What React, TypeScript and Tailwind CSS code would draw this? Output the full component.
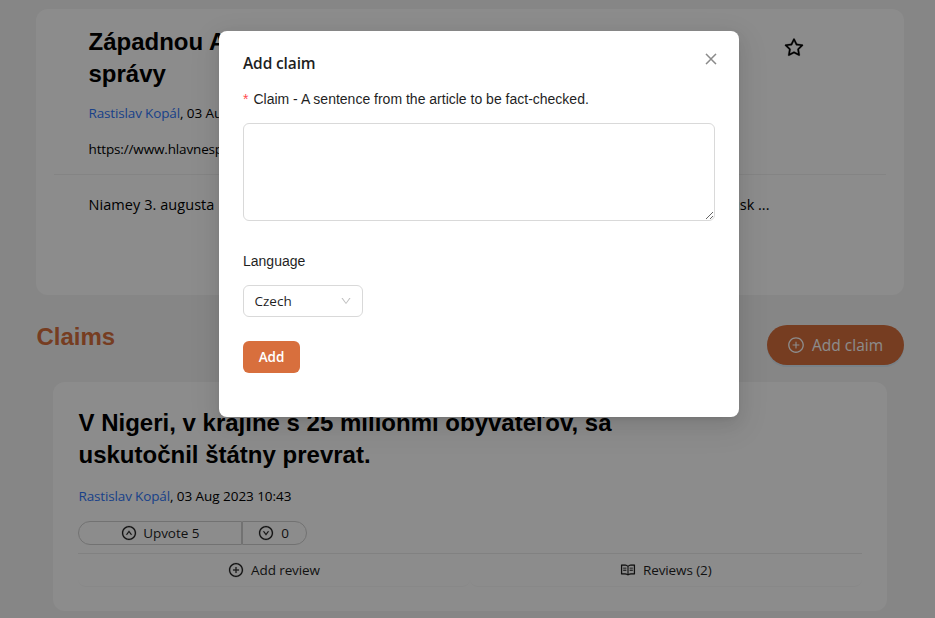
import type { ReactNode } from "react";
import {
  AiOutlineClose,
  AiOutlineDown,
  AiOutlineDownCircle,
  AiOutlinePlusCircle,
  AiOutlineRead,
  AiOutlineStar,
  AiOutlineUpCircle,
} from "react-icons/ai";

const UI = "font-['Open_Sans','Noto_Sans',sans-serif]";
const ARIAL = "font-['Liberation_Sans',Arial,sans-serif]";

function Heading({ children }: { children: ReactNode }) {
  return (
    <h2 className={`${ARIAL} text-2xl leading-8 font-bold text-black`}>
      {children}
    </h2>
  );
}

function Byline({ date }: { date: string }) {
  return (
    <p className="text-[13.5px] leading-[22px] tracking-[-0.05px] whitespace-nowrap text-black">
      <a className="tracking-[-0.15px] text-[#3077fa]">Rastislav Kopál</a>, {date}
    </p>
  );
}

function ArticleCard() {
  return (
    <section className="h-[286px] rounded-xl bg-white px-[18px] pt-[17px]">
      <div className="flex h-[149px] justify-between border-b border-[#f0f0f0] pr-[81px] pl-[34.5px]">
        <div className="w-[560px]">
          <Heading>
            Západnou Afrikou otriasa prevrat, hlavné
            <br />
            správy
          </Heading>
          <div className="mt-3">
            <Byline date="03 Aug 2023" />
          </div>
          <p className="mt-3.5 text-[13.5px] leading-[22px] tracking-[-0.15px]">
            https://www.hlavnesp
          </p>
        </div>
        <AiOutlineStar className="mt-[11px] size-[22px] stroke-[12] text-black" />
      </div>
      <div className="mt-[19px] flex w-[715.5px] justify-between pl-[34.5px] text-[14.5px] leading-[22px] text-black">
        <span className="tracking-[0.06px]">Niamey 3. augusta</span>
        <span>vojusk ...</span>
      </div>
    </section>
  );
}

function ClaimsHeader() {
  return (
    <div className="mt-[30px] flex h-10 justify-between">
      <h2 className={`${ARIAL} pl-[0.5px] text-2xl leading-6 font-bold text-[#d86f3d]`}>Claims</h2>
      <button className="flex h-10 w-[137px] items-center gap-2 rounded-full bg-[#d86f3d] pl-5 text-[15.5px] text-white shadow-[0_2px_0_rgba(5,145,255,0.1)]">
        <AiOutlinePlusCircle className="size-[18px]" />
        <span className="-ml-px pt-0.5">Add claim</span>
      </button>
    </div>
  );
}

function ClaimCard() {
  return (
    <section className="mx-[17px] mt-[17px] h-[229px] rounded-xl bg-white px-[25px] pt-[25px]">
      <div className="pl-[0.5px]">
        <Heading>
          V Nigeri, v krajine s 25 miliónmi obyvateľov, sa
          <br />
          uskutočnil štátny prevrat.
        </Heading>
        <div className="mt-3.5">
          <Byline date="03 Aug 2023 10:43" />
        </div>
      </div>
      <div className="mt-3.5 flex h-6 text-[13.5px] text-[#1f1f1f]">
        <button className="flex w-[164px] items-center justify-center gap-2 rounded-l-full border border-[#d0d0d0] tracking-[-0.05px]">
          <AiOutlineUpCircle className="size-4 stroke-[12]" />
          <span className="-ml-[1.5px]">Upvote 5</span>
        </button>
        <button className="flex w-[65px] items-center justify-center gap-2 rounded-r-full border border-[#d0d0d0] pr-0.5">
          <AiOutlineDownCircle className="size-4 stroke-[12]" />
          <span className="-ml-px">0</span>
        </button>
      </div>
      <ul className="mt-2 flex h-[34px] border-t border-[#ebebeb] text-[13.5px] tracking-[-0.1px] text-[#1f1f1f]">
        <li className="flex flex-1 items-center justify-center gap-2 rounded-b-lg border-b border-[#f8f8f8]">
          <AiOutlinePlusCircle className="size-4 stroke-[12]" />
          <span className="-ml-px">Add review</span>
        </li>
        <li className="flex flex-1 items-center justify-center gap-2 rounded-b-lg border-b border-[#f8f8f8]">
          <AiOutlineRead className="size-4 stroke-[8]" />
          <span className="-ml-[1.5px]">Reviews (2)</span>
        </li>
      </ul>
    </section>
  );
}

function ClaimDialog() {
  return (
    <div
      role="dialog"
      className="relative mt-[31px] ml-[219px] h-[386px] w-[520px] rounded-lg bg-white px-6 pt-5 text-[#1f1f1f] shadow-[0_6px_16px_0_rgba(0,0,0,0.08),0_3px_6px_-4px_rgba(0,0,0,0.12),0_9px_28px_8px_rgba(0,0,0,0.05)]"
    >
      <button className="absolute top-[20px] right-[20px] text-black/45">
        <AiOutlineClose className="size-4 stroke-[10]" />
      </button>
      <h3 className="text-[15.5px] leading-6 font-semibold tracking-[-0.13px]">Add claim</h3>
      <label className={`${ARIAL} mt-[13px] flex h-[22px] items-center text-sm`}>
        <span className="mr-[5px] text-[#ff4d4f]">*</span>
        Claim - A sentence from the article to be fact-checked.
      </label>
      <textarea className="mt-[13px] block h-[98px] w-full resize-y rounded-md border border-[#d9d9d9] outline-none" />
      <label className={`${ARIAL} mt-[29px] block text-sm leading-[22px]`}>Language</label>
      <div className="mt-[13px] flex h-8 w-[120px] items-center justify-between rounded-md border border-[#d9d9d9] pr-2.5 pl-[10.5px] text-[13.5px]">
        Czech
        <AiOutlineDown className="size-3 text-black/25" />
      </div>
      <button className="mt-6 h-8 w-[57px] rounded-md bg-[#d86f3d] text-[13.5px] font-semibold text-white">
        Add
      </button>
    </div>
  );
}

export default function App() {
  return (
    <div className={`${UI} relative h-[618px] w-[935px] overflow-hidden bg-[#f5f5f5]`}>
      <main className="flex flex-col pt-[9px] pr-[31px] pl-9">
        <ArticleCard />
        <ClaimsHeader />
        <ClaimCard />
      </main>
      <div className="absolute inset-0 bg-black/45">
        <ClaimDialog />
      </div>
    </div>
  );
}
